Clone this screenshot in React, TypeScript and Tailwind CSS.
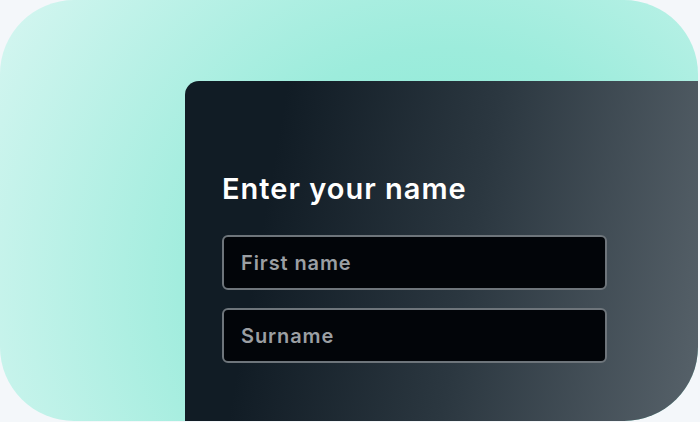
export default function App() {
    return (
        <div className="w-[700px] h-[422px] bg-[#f4f7fa]" style={{ fontFamily: "Inter, 'Noto Sans', sans-serif" }}>
            <div className="w-[698px] h-[421px] rounded-[74px] overflow-hidden flex pl-[185px] pt-[81px] bg-[radial-gradient(circle_at_64%_68%,#80e9d3_0%,#9decdc_45%,#d6f6f1_100%)]">
                <div className="flex-1 rounded-tl-[14px] bg-[linear-gradient(100deg,#111c25_18%,#2b3740_55%,#57626a_100%)] pl-[37px] pt-[90px]">
                    <h1 className="text-[29px] leading-[36px] font-semibold text-white tracking-[1px]">Enter your name</h1>
                    <div className="mt-[28px] flex flex-col gap-[18px] w-[385px]">
                        <Field placeholder="First name" />
                        <Field placeholder="Surname" />
                    </div>
                </div>
            </div>
        </div>
    );
}

function Field({ placeholder }: { placeholder: string }) {
    return (
        <div className="h-[55px] rounded-[6px] border-2 border-[#6e757b] bg-[#020509] flex items-center px-[17px]">
            <span className="text-[20px] font-semibold text-[#9b9fa3] tracking-[0.9px]">{placeholder}</span>
        </div>
    );
}
